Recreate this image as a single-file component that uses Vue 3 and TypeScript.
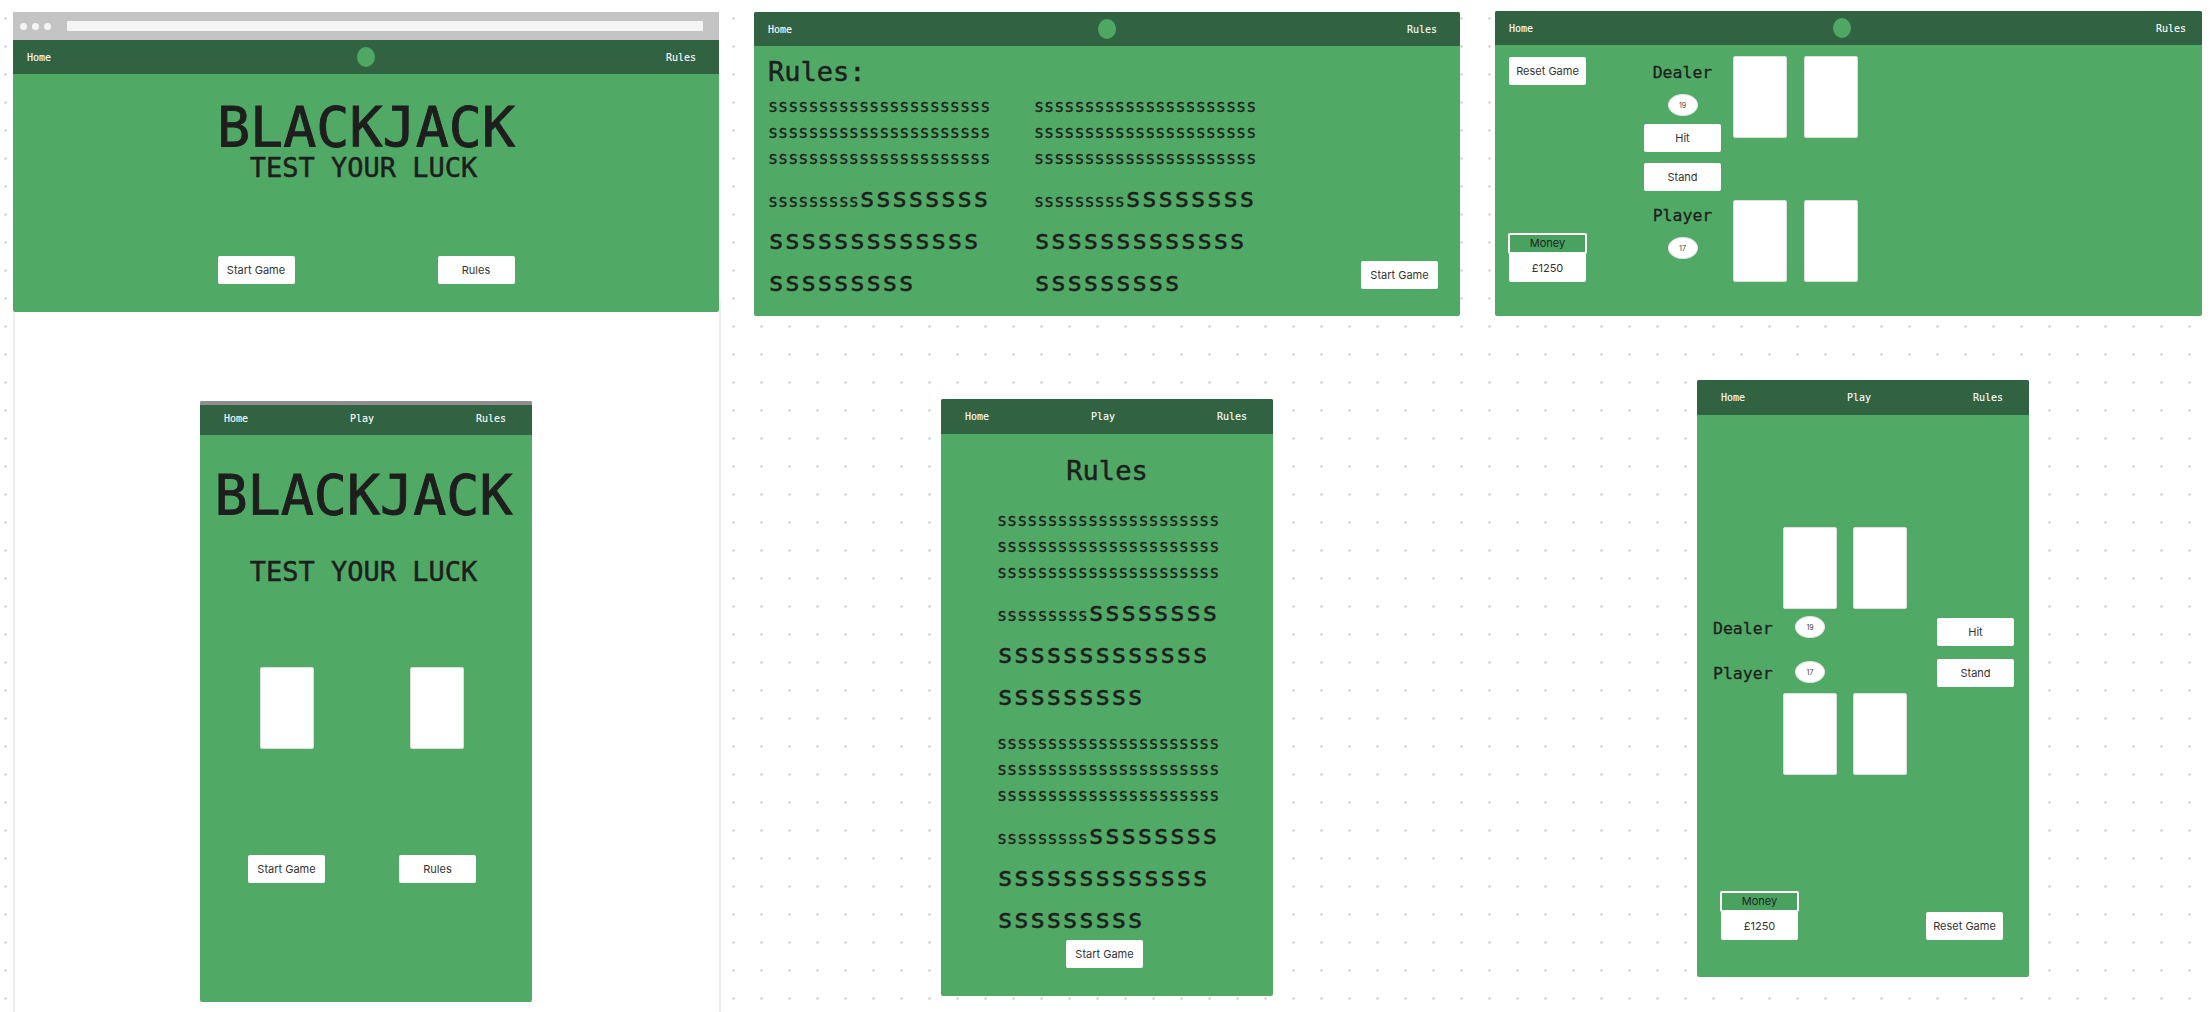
<template>
  <div class="canvas">
    <div class="sheet"></div>

    <!-- desktop: landing -->
    <section class="frame f-land">
      <div class="chrome">
        <span class="dot"></span><span class="dot"></span><span class="dot"></span>
        <span class="urlbar"></span>
      </div>
      <header class="nav nav-desk">
        <span>Home</span><span class="logo"></span><span>Rules</span>
      </header>
      <div class="land-body">
        <h1 class="big">BLACKJACK</h1>
        <h2 class="sub">TEST YOUR LUCK</h2>
        <div class="land-btns">
          <button>Start Game</button>
          <button>Rules</button>
        </div>
      </div>
    </section>

    <!-- desktop: rules -->
    <section class="frame f-rules">
      <header class="nav nav-desk">
        <span>Home</span><span class="logo"></span><span>Rules</span>
      </header>
      <div class="rules-body">
        <h2 class="rules-title">Rules:</h2>
        <div class="rules-cols">
          <div v-for="c in 2" :key="c" class="rule-col">
            <p v-for="n in 3" :key="n" class="sm">{{ small }}</p>
            <p class="mix"><span class="sm">{{ nineS }}</span><span class="lg">{{ eightS }}</span></p>
            <p class="lg line">{{ thirteenS }}</p>
            <p class="lg line">{{ nineS }}</p>
          </div>
        </div>
        <button class="rules-start">Start Game</button>
      </div>
    </section>

    <!-- desktop: game -->
    <section class="frame f-game">
      <header class="nav nav-desk">
        <span>Home</span><span class="logo"></span><span>Rules</span>
      </header>
      <div class="game-body">
        <div class="game-left">
          <button>Reset Game</button>
          <div class="money">
            <div class="money-label">Money</div>
            <div class="money-value">£1250</div>
          </div>
        </div>
        <div class="game-mid">
          <div class="who">Dealer</div>
          <div class="score">19</div>
          <button class="hit">Hit</button>
          <button class="stand">Stand</button>
          <div class="who player">Player</div>
          <div class="score">17</div>
        </div>
        <div class="game-cards">
          <div class="card"></div><div class="card"></div>
          <div class="card"></div><div class="card"></div>
        </div>
      </div>
    </section>

    <!-- mobile: landing -->
    <section class="frame m-land">
      <div class="greybar"></div>
      <header class="nav nav-mob">
        <span>Home</span><span>Play</span><span>Rules</span>
      </header>
      <div class="mland-body">
        <h1 class="big">BLACKJACK</h1>
        <h2 class="sub">TEST YOUR LUCK</h2>
        <div class="mland-cards">
          <div class="card"></div><div class="card"></div>
        </div>
        <div class="mland-btns">
          <button>Start Game</button>
          <button>Rules</button>
        </div>
      </div>
    </section>

    <!-- mobile: rules -->
    <section class="frame m-rules">
      <header class="nav nav-mob">
        <span>Home</span><span>Play</span><span>Rules</span>
      </header>
      <div class="mrules-body">
        <h2 class="mrules-title">Rules</h2>
        <div v-for="c in 2" :key="c" class="rule-col mrule-col">
          <p v-for="n in 3" :key="n" class="sm">{{ small }}</p>
          <p class="mix"><span class="sm">{{ nineS }}</span><span class="lg">{{ eightS }}</span></p>
          <p class="lg line">{{ thirteenS }}</p>
          <p class="lg line">{{ nineS }}</p>
        </div>
        <button class="mrules-start">Start Game</button>
      </div>
    </section>

    <!-- mobile: game -->
    <section class="frame m-game">
      <header class="nav nav-mob">
        <span>Home</span><span>Play</span><span>Rules</span>
      </header>
      <div class="mgame-body">
        <div class="mgame-cards">
          <div class="card"></div><div class="card"></div>
        </div>
        <div class="mgame-mid">
          <div class="who">Dealer</div>
          <div class="score">19</div>
          <button class="mhit">Hit</button>
          <div class="who">Player</div>
          <div class="score">17</div>
          <button class="mstand">Stand</button>
        </div>
        <div class="mgame-cards">
          <div class="card"></div><div class="card"></div>
        </div>
        <div class="mgame-foot">
          <div class="money">
            <div class="money-label">Money</div>
            <div class="money-value">£1250</div>
          </div>
          <button>Reset Game</button>
        </div>
      </div>
    </section>
  </div>
</template>

<script setup lang="ts">
const small = 's'.repeat(22)
const eightS = 's'.repeat(8)
const thirteenS = 's'.repeat(13)
const nineS = 's'.repeat(9)
</script>

<style>
html,
body {
  margin: 0;
  background: #fff;
}
</style>

<style scoped>
.canvas {
  position: relative;
  width: 2210px;
  height: 1012px;
  overflow: hidden;
  background-color: #fff;
  background-image: radial-gradient(circle, #c4c4c4 0.9px, transparent 1.4px);
  background-size: 28px 28px;
  background-position: -8.5px 4.5px;
  font-family: Inter, 'Liberation Sans', sans-serif;
}
.sheet {
  position: absolute;
  left: 13px;
  top: 300px;
  width: 704px;
  height: 712px;
  background: #fff;
  border-left: 2px solid #eee;
  border-right: 2px solid #eee;
}
h1,
h2,
p {
  margin: 0;
  font-weight: 400;
}
.frame {
  position: absolute;
  display: flex;
  flex-direction: column;
  background: #50aa66;
  border-radius: 2px;
  overflow: hidden;
}
.f-land {
  left: 13px;
  top: 12px;
  width: 706px;
  height: 300px;
}
.f-rules {
  left: 754px;
  top: 12px;
  width: 706px;
  height: 304px;
}
.f-game {
  left: 1495px;
  top: 11px;
  width: 707px;
  height: 305px;
}
.m-land {
  left: 200px;
  top: 401px;
  width: 332px;
  height: 601px;
}
.m-rules {
  left: 941px;
  top: 399px;
  width: 332px;
  height: 597px;
}
.m-game {
  left: 1697px;
  top: 380px;
  width: 332px;
  height: 597px;
}
.chrome {
  height: 28px;
  flex: none;
  display: flex;
  align-items: center;
  gap: 5px;
  padding: 0 7px 0 7px;
  background: #c4c4c4;
}
.dot {
  width: 7px;
  height: 7px;
  border-radius: 50%;
  background: #f5f5f5;
}
.urlbar {
  flex: 1;
  height: 10px;
  margin-left: 11px;
  margin-right: 9px;
  background: #f5f5f5;
  border-radius: 1px;
}
.greybar {
  height: 4px;
  flex: none;
  background: #8f8f8f;
}
.nav {
  flex: none;
  color: #fff;
  background: #316342;
  font-family: 'DejaVu Sans Mono', monospace;
  font-size: 10px;
  -webkit-text-stroke: 0.1px #fff;
}
.nav-desk {
  height: 34px;
  padding: 0 14px;
  display: grid;
  grid-template-columns: 1fr auto 1fr;
  align-items: center;
}
.nav-desk span:last-child {
  justify-self: end;
  margin-right: 9px;
}
.f-game .nav-desk span:last-child {
  margin-right: 2px;
}
.f-game .logo {
  margin-right: 13px;
}
.nav-mob {
  height: 30px;
  padding: 0 26px 4px 24px;
  box-sizing: border-box;
  display: flex;
  justify-content: space-between;
  align-items: center;
}
.m-rules .nav-mob,
.m-game .nav-mob {
  height: 35px;
  padding-bottom: 0;
}
.logo {
  width: 18px;
  height: 20px;
  border-radius: 50%;
  background: #4ea863;
}
button {
  width: 77px;
  height: 28px;
  padding: 0;
  border: none;
  border-radius: 2px;
  background: #fff;
  color: #333;
  font-family: Inter, 'Liberation Sans', sans-serif;
  font-size: 11px;
}
.big {
  font-family: 'DejaVu Sans Mono', monospace;
  font-size: 55px;
  line-height: 54px;
  color: #1e1e1e;
  -webkit-text-stroke: 0.9px #1e1e1e;
}
.sub {
  font-family: 'DejaVu Sans Mono', monospace;
  font-size: 27px;
  line-height: 30px;
  color: #1e1e1e;
  -webkit-text-stroke: 0.5px #1e1e1e;
  margin-left: -5px;
}
.land-body {
  flex: 1;
  display: flex;
  flex-direction: column;
  align-items: center;
  padding-top: 26px;
}
.land-body .sub {
  margin-top: -1px;
}
.land-btns {
  display: flex;
  gap: 143px;
  margin-top: 73px;
}
.rules-body {
  position: relative;
  flex: 1;
  padding: 10px 14px 0;
  color: #1e1e1e;
  font-family: 'DejaVu Sans Mono', monospace;
}
.rules-title {
  font-size: 27px;
  line-height: 32px;
  -webkit-text-stroke: 0.5px #1e1e1e;
}
.rules-cols {
  display: flex;
  gap: 45px;
  margin-top: 5px;
}
.rule-col {
  width: 221px;
  white-space: nowrap;
}
.sm {
  font-size: 16.8px;
  line-height: 26px;
  -webkit-text-stroke: 0.3px #1e1e1e;
}
.lg {
  font-size: 27px;
  -webkit-text-stroke: 0.45px #1e1e1e;
}
.mix {
  margin-top: 6px;
  font-size: 27px;
  line-height: 42px;
}
.line {
  line-height: 42px;
}
.rules-start {
  position: absolute;
  right: 22px;
  bottom: 27px;
}
.game-body {
  flex: 1;
  display: flex;
  padding: 11px 0 0 14px;
}
.game-left {
  width: 77px;
  height: 226px;
  display: flex;
  flex-direction: column;
  justify-content: space-between;
}
.game-left button {
  margin-top: 1px;
}
.game-mid {
  width: 77px;
  margin-left: 58px;
  display: flex;
  flex-direction: column;
  align-items: center;
}
.game-mid .who {
  margin-top: 7px;
}
.game-mid .player {
  margin-top: 15px;
}
.game-mid .score {
  margin-top: 11px;
}
.game-mid .hit {
  margin-top: 8px;
}
.game-mid .stand {
  margin-top: 11px;
}
.who {
  font-family: 'DejaVu Sans Mono', monospace;
  font-size: 16.5px;
  line-height: 20px;
  color: #1e1e1e;
  -webkit-text-stroke: 0.3px #1e1e1e;
  white-space: nowrap;
}
.score {
  width: 30px;
  height: 22px;
  flex: none;
  box-sizing: border-box;
  display: flex;
  align-items: center;
  justify-content: center;
  border: 1px solid #e4e4e4;
  border-radius: 50%;
  background: #fff;
  color: #444;
  font-size: 7px;
}
.game-cards {
  margin-left: 12px;
  display: grid;
  grid-template-columns: 54px 54px;
  grid-auto-rows: 82px;
  column-gap: 17px;
  row-gap: 62px;
}
.card {
  width: 54px;
  height: 82px;
  box-sizing: border-box;
  background: #fff;
  border: 1px solid #dedede;
  border-radius: 2px;
}
.money {
  width: 77px;
}
.money-label {
  box-sizing: border-box;
  width: 79px;
  height: 21px;
  margin-left: -1px;
  border: 2px solid #fff;
  border-radius: 2px;
  background: #4aa260;
  color: #1e1e1e;
  font-size: 11px;
  line-height: 17px;
  text-align: center;
}
.money-value {
  height: 28px;
  background: #fff;
  border-radius: 0 0 2px 2px;
  color: #333;
  font-size: 11px;
  line-height: 28px;
  text-align: center;
}
.mland-body {
  flex: 1;
  display: flex;
  flex-direction: column;
  align-items: center;
  padding-top: 33px;
}
.mland-body .big {
  margin-left: -5px;
}
.mland-body .sub {
  margin-top: 35px;
}
.mland-cards {
  display: flex;
  gap: 96px;
  margin-top: 80px;
  margin-left: -8px;
}
.mland-btns {
  display: flex;
  gap: 74px;
  margin-top: 106px;
  margin-left: -8px;
}
.mrules-body {
  flex: 1;
  display: flex;
  flex-direction: column;
  align-items: center;
  color: #1e1e1e;
  font-family: 'DejaVu Sans Mono', monospace;
  padding-top: 21px;
}
.mrules-title {
  font-size: 27px;
  line-height: 32px;
  margin-bottom: 20px;
  -webkit-text-stroke: 0.5px #1e1e1e;
}
.mrule-col {
  margin-left: 1px;
}
.mrule-col + .mrule-col {
  margin-top: 13px;
}
.mrules-start {
  margin-left: -5px;
}
.mgame-body {
  flex: 1;
  display: flex;
  flex-direction: column;
  align-items: center;
  padding-top: 112px;
}
.mgame-cards {
  display: flex;
  gap: 16px;
  margin-left: -36px;
}
.mgame-mid {
  width: 100%;
  height: 84px;
  box-sizing: border-box;
  padding: 8px 15px 0 16px;
  display: grid;
  grid-template-columns: 82px 30px 1fr;
  grid-auto-rows: 45px;
  align-items: start;
}
.mgame-mid button {
  justify-self: end;
}
.mgame-mid .mhit {
  margin-top: 1px;
}
.mgame-mid .mstand {
  margin-top: -3px;
}
.mgame-mid .score {
  margin-top: -1px;
}
.mgame-mid .who {
  margin-top: 2px;
}
.mgame-foot {
  width: 100%;
  box-sizing: border-box;
  display: flex;
  justify-content: space-between;
  align-items: flex-end;
  padding: 0 26px 0 24px;
  margin-top: 116px;
}
</style>
